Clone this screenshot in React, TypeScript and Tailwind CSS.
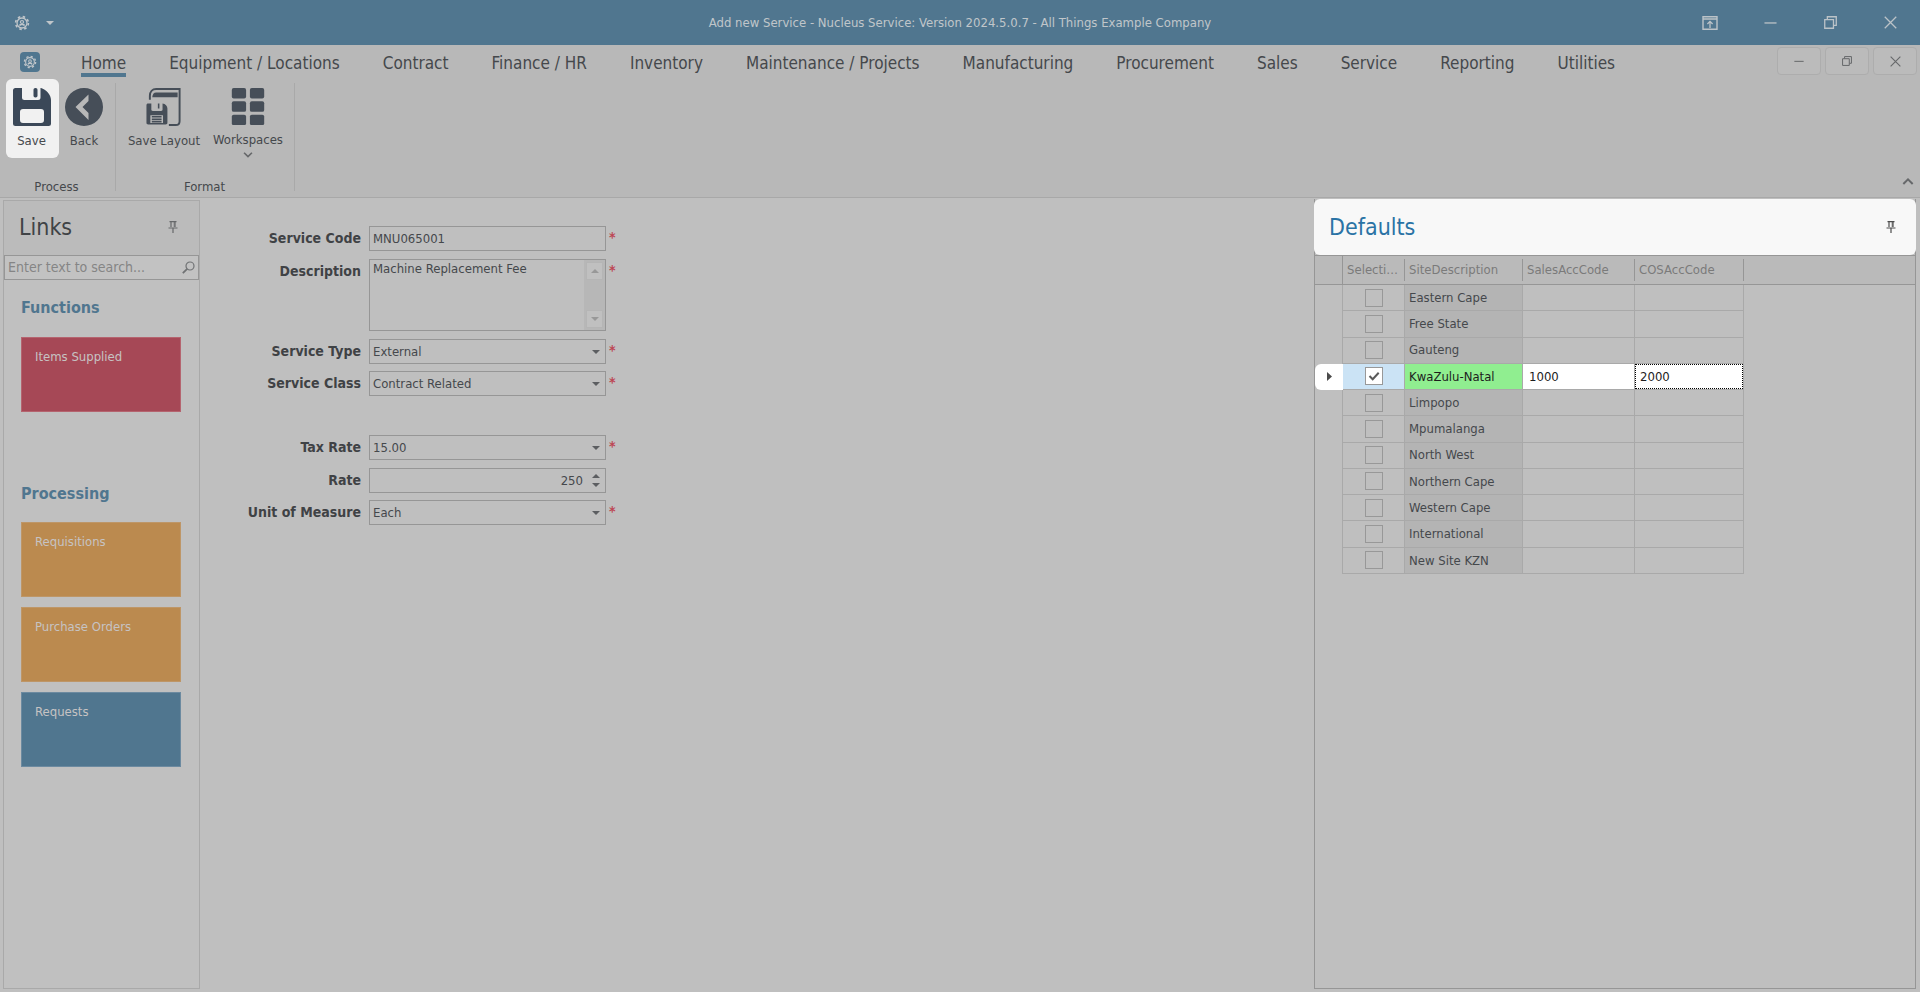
import React from "react";
import { clsx } from "clsx";

const TABS = [
  "Home",
  "Equipment / Locations",
  "Contract",
  "Finance / HR",
  "Inventory",
  "Maintenance / Projects",
  "Manufacturing",
  "Procurement",
  "Sales",
  "Service",
  "Reporting",
  "Utilities",
];

const SITES = [
  "Eastern Cape",
  "Free State",
  "Gauteng",
  "KwaZulu-Natal",
  "Limpopo",
  "Mpumalanga",
  "North West",
  "Northern Cape",
  "Western Cape",
  "International",
  "New Site KZN",
];

interface IconProps {
  className?: string;
}

const GearIcon: React.FC<IconProps> = ({ className }) => (
  <svg viewBox="0 0 16 16" className={className} fill="none" stroke="currentColor" aria-hidden="true">
    <circle cx="8" cy="8" r="6.4" strokeWidth="1.6" strokeDasharray="2.5 2.52" />
    <circle cx="8" cy="8" r="5" strokeWidth="1.3" />
    <circle cx="8" cy="7" r="1.5" strokeWidth="1.2" />
    <path d="M6 11V9.6h4V11" strokeWidth="1.2" />
  </svg>
);

const PinIcon: React.FC<IconProps> = ({ className }) => (
  <svg viewBox="0 0 10 12" className={className} fill="none" stroke="currentColor" aria-hidden="true">
    <path d="M1.500.7h7M3 1v5M7 1v5M.5 7h9M5 7v5" strokeWidth="1.2" />
    <path d="M6.200 1v5" strokeWidth=".8" />
  </svg>
);

const CloseIcon: React.FC<IconProps> = ({ className }) => (
  <svg viewBox="0 0 14 14" className={className} fill="none" stroke="currentColor" aria-hidden="true">
    <path d="m.8.8 12.4 12.4M13.2.8.8 13.2" strokeWidth="1.4" />
  </svg>
);

const RestoreIcon: React.FC<IconProps> = ({ className }) => (
  <svg viewBox="0 0 14 14" className={className} fill="none" stroke="currentColor" aria-hidden="true">
    <path d="M.8 3.8h9.4v9.4H.8zM3.6 3.4V.8h9.6v9.4h-2.6" strokeWidth="1.4" />
  </svg>
);

const MinimizeIcon: React.FC<IconProps> = ({ className }) => (
  <svg viewBox="0 0 14 14" className={className} fill="none" stroke="currentColor" aria-hidden="true">
    <path d="M.5 7.5h13" strokeWidth="1.4" />
  </svg>
);

const RibbonToggleIcon: React.FC<IconProps> = ({ className }) => (
  <svg viewBox="0 0 16 14" className={className} fill="none" stroke="currentColor" aria-hidden="true">
    <path d="M1 .8h14v12.4H1zM1 3h14" strokeWidth="1.4" />
    <path d="M8 12V5.4M5.4 8 8 5.4 10.6 8" strokeWidth="1.3" />
  </svg>
);

const SearchIcon: React.FC<IconProps> = ({ className }) => (
  <svg viewBox="0 0 13 13" className={className} fill="none" stroke="currentColor" aria-hidden="true">
    <circle cx="8" cy="5" r="4" strokeWidth="1.2" />
    <path d="M5.2 7.8.8 12.2" strokeWidth="1.8" />
  </svg>
);

const SaveIcon: React.FC<IconProps> = ({ className }) => (
  <svg viewBox="0 0 38 38" className={className} aria-hidden="true">
    <path
      fillRule="evenodd"
      fill="currentColor"
      d="M2.5 0H9v9.500a2.500 2.500 0 0 0 2.500 2.500h13.500a2.500 2.500 0 0 0 2.500-2.500V0h.5C33 1.500 38 6.500 38 12v23.500a2.500 2.500 0 0 1-2.500 2.500h-33A2.500 2.500 0 0 1 0 35.500v-33A2.500 2.500 0 0 1 2.500 0zM10 21a3 3 0 0 0-3 3v8a3 3 0 0 0 3 3h18a3 3 0 0 0 3-3v-8a3 3 0 0 0-3-3z"
    />
    <rect x="20.500" y="0" width="4" height="9.500" rx="1.800" fill="currentColor" />
  </svg>
);

const BackIcon: React.FC<IconProps> = ({ className }) => (
  <svg viewBox="0 0 38 38" className={className} aria-hidden="true">
    <path
      fillRule="evenodd"
      fill="currentColor"
      d="M19 0a19 19 0 1 0 0 38 19 19 0 0 0 0-38zM23.500 6.500V13l-6 6 6 6v7L10.500 19z"
    />
  </svg>
);

const SaveLayoutIcon: React.FC<IconProps> = ({ className }) => (
  <svg viewBox="0 0 36 39" className={className} fill="none" aria-hidden="true">
    <path
      d="M3.500 12V8c0-4 2.500-7 6.500-7h24v33c0 2.500-1.500 4-4 4h-7"
      stroke="currentColor"
      strokeWidth="2"
    />
    <path d="M6 9.500c0-3 1.500-5 4-5h22v5z" fill="currentColor" />
    <path
      fillRule="evenodd"
      fill="currentColor"
      d="M2 16h3v6c0 1 .5 1.500 1.500 1.500h8.500c1 0 1.500-.5 1.500-1.500v-6c3 .5 5 2.500 5 5v14.500c0 1.500-.5 2-2 2H2c-1.500 0-2-.5-2-2V18c0-1.500.5-2 2-2zm2 12v8h13v-8z"
    />
    <path d="M12.500 16v5M5.500 29.500h10M5.500 32h10M5.500 34.500h10" stroke="currentColor" strokeWidth="1.600" />
  </svg>
);

const WorkspacesIcon: React.FC<IconProps> = ({ className }) => (
  <svg viewBox="0 0 34 39" className={className} fill="currentColor" aria-hidden="true">
    {[0, 14, 28].map((y) => (
      <React.Fragment key={y}>
        <rect x="0" y={y} width="15" height="11" rx="2" />
        <rect x="19" y={y} width="15" height="11" rx="2" />
      </React.Fragment>
    ))}
  </svg>
);

const ChevronIcon: React.FC<IconProps> = ({ className }) => (
  <svg viewBox="0 0 10 6" className={className} fill="none" stroke="currentColor" aria-hidden="true">
    <path d="m1 .8 4 4 4-4" strokeWidth="1.700" />
  </svg>
);

const TriangleIcon: React.FC<IconProps> = ({ className }) => (
  <svg viewBox="0 0 8 4" className={className} fill="currentColor" aria-hidden="true">
    <path d="M0 0h8L4 4z" />
  </svg>
);

const TitleBar = () => (
  <header className="flex h-[45px] items-center bg-[#50768f] text-[#c0c6ca]">
    <div className="flex w-60 items-center pl-[14px]">
      <GearIcon className="h-4 w-4" />
      <button type="button" aria-label="Customize quick access" className="ml-[15px] p-px">
        <TriangleIcon className="h-1 w-2" />
      </button>
    </div>
    <h1 className="flex-1 text-center">
      Add new Service - Nucleus Service: Version 2024.5.0.7 - All Things Example Company
    </h1>
    <div className="flex h-full w-60 text-[#bcc3c8]">
      <button type="button" aria-label="Ribbon display options" className="flex flex-1 items-center justify-center">
        <RibbonToggleIcon className="h-[14px] w-4" />
      </button>
      <button type="button" aria-label="Minimize" className="flex flex-1 items-center justify-center">
        <MinimizeIcon className="h-[13px] w-[13px]" />
      </button>
      <button type="button" aria-label="Restore" className="flex flex-1 items-center justify-center">
        <RestoreIcon className="h-[13px] w-[13px]" />
      </button>
      <button type="button" aria-label="Close" className="flex flex-1 items-center justify-center">
        <CloseIcon className="h-[13px] w-[13px]" />
      </button>
    </div>
  </header>
);

const mdiButton =
  "flex h-7 w-11 items-center justify-center rounded-sm border border-[#adadad] bg-[#bbbbbb] text-[#66686a]";

const RibbonTabs = () => (
  <div className="flex h-[34px] items-start">
    <button
      type="button"
      aria-label="Application menu"
      className="mt-[7px] ml-5 flex h-5 w-5 items-center justify-center rounded-sm bg-[#50768f] text-[#c0c6ca]"
    >
      <GearIcon className="h-[14px] w-[14px]" />
    </button>
    <nav className="ml-[41px] flex flex-1 gap-[43px] text-[17px]">
      {TABS.map((tab, i) => (
        <a
          key={tab}
          href="#"
          className={clsx(
            "h-8 border-b-4 pt-1 leading-7 whitespace-nowrap",
            i === 0 ? "border-[#50768f]" : "border-transparent"
          )}
        >
          {tab}
        </a>
      ))}
    </nav>
    <div className="mt-[2px] flex gap-1 pr-[3px]">
      <button type="button" aria-label="Minimize document" className={mdiButton}>
        <MinimizeIcon className="h-[10px] w-[10px]" />
      </button>
      <button type="button" aria-label="Restore document" className={mdiButton}>
        <RestoreIcon className="h-[10px] w-[10px]" />
      </button>
      <button type="button" aria-label="Close document" className={mdiButton}>
        <CloseIcon className="h-[11px] w-[11px]" />
      </button>
    </div>
  </div>
);

interface RibbonButtonProps {
  label: string;
  icon: React.ReactNode;
  className?: string;
  dropdown?: boolean;
}

const RibbonButton: React.FC<RibbonButtonProps> = ({ label, icon, className, dropdown }) => (
  <button type="button" className={clsx("flex h-[79px] flex-col items-center pt-[9px]", className)}>
    {icon}
    <span className="mt-[7px] leading-4 whitespace-nowrap">{label}</span>
    {dropdown && <ChevronIcon className="mt-1 h-[6px] w-[10px] text-[#66686a]" />}
  </button>
);

const Ribbon = () => (
  <section className="border-b border-[#a8a8a8] bg-[#b8b8b8]">
    <RibbonTabs />
    <div className="flex h-[118px]">
      <div className="flex w-[115px] flex-col pl-[6px]">
        <div className="flex">
          <RibbonButton
            label="Save"
            className="w-[53px] rounded-md bg-[#f1f1f1] pr-[2px] text-[#46494d]"
            icon={<SaveIcon className="h-[38px] w-[38px] text-[#3b4858]" />}
          />
          <RibbonButton
            label="Back"
            className="w-[50px]"
            icon={<BackIcon className="h-[38px] w-[38px] text-[#464e58]" />}
          />
        </div>
        <span className="mt-[21px] mr-2 text-center leading-4">Process</span>
      </div>
      <div className="mt-1 h-[108px] w-px bg-[#a9a9a9]" />
      <div className="flex w-[178px] flex-col pl-[3px]">
        <div className="flex">
          <RibbonButton
            label="Save Layout"
            className="w-[90px]"
            icon={<SaveLayoutIcon className="h-[38px] w-9 text-[#464e58]" />}
          />
          <RibbonButton
            label="Workspaces"
            dropdown
            className="w-[78px]"
            icon={<WorkspacesIcon className="h-[38px] w-[34px] text-[#464e58]" />}
          />
        </div>
        <span className="mt-[21px] mr-1 text-center leading-4">Format</span>
      </div>
      <div className="mt-1 h-[108px] w-px bg-[#a9a9a9]" />
      <button type="button" aria-label="Collapse ribbon" className="mt-auto ml-auto px-[6px] pb-3">
        <ChevronIcon className="h-[7px] w-3 rotate-180 text-[#66686a]" />
      </button>
    </div>
  </section>
);

interface TileProps {
  label: string;
  className: string;
}

const Tile: React.FC<TileProps> = ({ label, className }) => (
  <button
    type="button"
    className={clsx("flex h-[75px] w-full items-start border px-[13px] pt-[11px] leading-4 text-[#c6c3c3]", className)}
  >
    {label}
  </button>
);

const LinksPanel = () => (
  <aside className="flex w-[197px] flex-col border border-[#a9a9a9] bg-[#c0c0c0]">
    <div className="flex h-[54px] items-center justify-between bg-[#bbbbbb] pr-[21px] pb-[2px] pl-[15px]">
      <h2 className="text-[23px] leading-9 text-[#404346]">Links</h2>
      <button type="button" aria-label="Pin Links">
        <PinIcon className="h-3 w-[10px] text-[#66686a]" />
      </button>
    </div>
    <div className="flex h-[25px] items-center border border-[#969696] bg-[#c2c2c2] pr-[3px] pl-[3px]">
      <input
        type="search"
        aria-label="Search links"
        placeholder="Enter text to search..."
        className="min-w-0 flex-1 bg-transparent text-[14px] outline-none placeholder:text-[#858585]"
      />
      <SearchIcon className="h-[13px] w-[13px] text-[#707274]" />
    </div>
    <div className="pr-[18px] pl-[17px]">
      <h3 className="mt-4 text-[16px] leading-6 font-bold text-[#50768f]">Functions</h3>
      <div className="mt-[17px]">
        <Tile label="Items Supplied" className="border-[#b5646f] bg-[#a64856]" />
      </div>
      <h3 className="mt-[70px] text-[16px] leading-6 font-bold text-[#50768f]">Processing</h3>
      <div className="mt-4 flex flex-col gap-[10px]">
        <Tile label="Requisitions" className="border-[#be9667] bg-[#bb8a4f]" />
        <Tile label="Purchase Orders" className="border-[#be9667] bg-[#bb8a4f]" />
        <Tile label="Requests" className="border-[#6c8aa0] bg-[#50768f]" />
      </div>
    </div>
  </aside>
);

interface FieldProps {
  id: string;
  label: string;
  required?: boolean;
  className?: string;
  children: React.ReactNode;
}

const Field: React.FC<FieldProps> = ({ id, label, required, className, children }) => (
  <div className={clsx("flex items-start", className)}>
    <label htmlFor={id} className="mr-2 w-[120px] text-right text-[14px] leading-6 font-bold text-[#3f4245]">
      {label}
    </label>
    {children}
    {required && <span className="ml-[3px] text-[14px] leading-[22px] font-bold text-[#bd4653]">*</span>}
  </div>
);

const SelectBox = ({ id, value }: { id: string; value: string }) => (
  <div className="relative">
    <select
      id={id}
      defaultValue={value}
      className="h-[25px] w-[237px] appearance-none border border-[#969696] bg-transparent pr-5 pl-[3px] outline-none"
    >
      <option>{value}</option>
    </select>
    <TriangleIcon className="pointer-events-none absolute top-[11px] right-[6px] h-1 w-2 text-[#5c5e61]" />
  </div>
);

const scrollButton = "flex h-[18px] w-[17px] items-center justify-center border border-[#b5b5b5] bg-[#c0c0c0]";

const ServiceForm = () => (
  <main className="flex-1 pt-[26px] pl-[41px]">
    <Field id="code" label="Service Code" required>
      <input
        id="code"
        defaultValue="MNU065001"
        className="h-[25px] w-[237px] border border-[#969696] bg-transparent px-[3px] outline-none"
      />
    </Field>
    <Field id="description" label="Description" required className="mt-2">
      <div className="flex h-[72px] w-[237px] border border-[#969696]">
        <textarea
          id="description"
          defaultValue="Machine Replacement Fee"
          className="h-full min-w-0 flex-1 resize-none overflow-hidden bg-transparent px-[3px] pt-px leading-4 outline-none"
        />
        <div className="flex flex-col justify-between bg-[#b7b7b7] px-[2px] py-[2px] text-[#989898]">
          <button type="button" aria-label="Scroll up" className={scrollButton}>
            <TriangleIcon className="h-1 w-2 rotate-180" />
          </button>
          <button type="button" aria-label="Scroll down" className={scrollButton}>
            <TriangleIcon className="h-1 w-2" />
          </button>
        </div>
      </div>
    </Field>
    <Field id="type" label="Service Type" required className="mt-2">
      <SelectBox id="type" value="External" />
    </Field>
    <Field id="class" label="Service Class" required className="mt-[7px]">
      <SelectBox id="class" value="Contract Related" />
    </Field>
    <Field id="tax" label="Tax Rate" required className="mt-[39px]">
      <SelectBox id="tax" value="15.00" />
    </Field>
    <Field id="rate" label="Rate" className="mt-2">
      <div className="flex h-[25px] w-[237px] border border-[#969696]">
        <input
          id="rate"
          defaultValue="250"
          inputMode="numeric"
          className="min-w-0 flex-1 bg-transparent pr-[9px] text-right outline-none"
        />
        <div className="flex flex-col justify-evenly pr-[5px] text-[#5c5e61]">
          <button type="button" aria-label="Increase rate">
            <TriangleIcon className="h-1 w-2 rotate-180" />
          </button>
          <button type="button" aria-label="Decrease rate">
            <TriangleIcon className="h-1 w-2" />
          </button>
        </div>
      </div>
    </Field>
    <Field id="unit" label="Unit of Measure" required className="mt-[7px]">
      <SelectBox id="unit" value="Each" />
    </Field>
  </main>
);

const HeaderCell = ({ label }: { label: string }) => (
  <th className="border-y border-[#969696] p-0 text-left font-normal">
    <div className="h-[22px] truncate border-r border-[#969696] px-1 leading-[22px]">{label}</div>
  </th>
);

const cell = "border-r border-b border-[#a9a9a9] p-0";

const SiteRow = ({ site }: { site: string }) => {
  const active = site === "KwaZulu-Natal";

  return (
    <tr className={clsx("h-[26px]", active && "text-[#1d1d1d]")}>
      <td className={clsx("border-r p-0", active ? "rounded-l-md border-white bg-white" : "border-[#a9a9a9]")}>
        {active && (
          <svg viewBox="0 0 5 9" className="ml-3 h-[9px] w-[5px] text-[#4a4a4a]" fill="currentColor" aria-hidden="true">
            <path d="M0 0v9l5-4.500z" />
          </svg>
        )}
      </td>
      <td className={clsx(cell, active && "bg-[#cbe3f5]")}>
        <div className="relative mx-auto h-[18px] w-[18px]">
          <input
            type="checkbox"
            aria-label={`Select ${site}`}
            defaultChecked={active}
            className="block h-[18px] w-[18px] appearance-none border border-[#989898] checked:bg-white"
          />
          {active && (
            <svg
              viewBox="0 0 18 18"
              className="pointer-events-none absolute inset-0"
              fill="none"
              stroke="#5a5a5a"
              aria-hidden="true"
            >
              <path d="m4.500 9 3.200 3.300 6-6.500" strokeWidth="2" />
            </svg>
          )}
        </div>
      </td>
      <td className={clsx(cell, "pl-1", active ? "bg-[#90ee90]" : "bg-[#b4b4b4]")}>{site}</td>
      <td className={clsx(cell, active && "bg-white pl-[6px]")}>{active && "1000"}</td>
      <td className={clsx(cell, active && "bg-white")}>
        {active && <div className="h-[25px] border border-dotted border-black pl-1 leading-[23px]">2000</div>}
      </td>
      <td />
    </tr>
  );
};

const DefaultsPanel = () => (
  <aside className="mt-[-1px] flex w-[602px] flex-col border border-t-0 border-[#969696]">
    <div className="mx-[-1px] flex h-14 items-center justify-between rounded-md bg-[#f8f8f8] pr-5 pl-[15px]">
      <h2 className="text-[23px] leading-9 text-[#2a73a5]">Defaults</h2>
      <button type="button" aria-label="Pin Defaults">
        <PinIcon className="h-3 w-[10px] text-[#4d4d4d]" />
      </button>
    </div>
    <table className="h-[319px] w-full table-fixed border-separate border-spacing-0">
      <colgroup>
        <col className="w-[28px]" />
        <col className="w-[62px]" />
        <col className="w-[118px]" />
        <col className="w-[112px]" />
        <col className="w-[109px]" />
        <col />
      </colgroup>
      <thead className="bg-[#bababa] text-[#7a7a7a]">
        <tr className="h-[30px]">
          <th aria-label="Row indicator" className="border-y border-r border-[#969696] p-0" />
          <HeaderCell label="Selection" />
          <HeaderCell label="SiteDescription" />
          <HeaderCell label="SalesAccCode" />
          <HeaderCell label="COSAccCode" />
          <th aria-hidden="true" className="border-y border-[#969696] p-0" />
        </tr>
      </thead>
      <tbody>
        {SITES.map((site) => (
          <SiteRow key={site} site={site} />
        ))}
      </tbody>
    </table>
  </aside>
);

export default function App() {
  return (
    <div className="flex min-h-screen flex-col bg-[#bfbfbf] font-['DejaVu_Sans_Condensed','DejaVu_Sans',sans-serif] text-[13px] text-[#45484c]">
      <TitleBar />
      <Ribbon />
      <div className="flex flex-1 pt-[2px] pr-1 pb-[3px] pl-[3px]">
        <LinksPanel />
        <ServiceForm />
        <DefaultsPanel />
      </div>
    </div>
  );
}
